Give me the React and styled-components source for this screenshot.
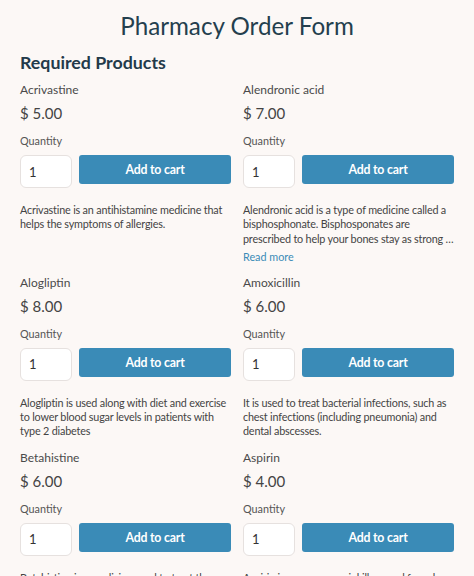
import React from "react";
import styled, { createGlobalStyle } from "styled-components";

const Global = createGlobalStyle`
  html, body { margin: 0; padding: 0; background: #fcf8f6; }
  body { font-family: Lato, "Open Sans", sans-serif; color: #4a4a4a; }
  * { box-sizing: border-box; }
`;

const Page = styled.div`
  padding: 0 20px;
  background: #fcf8f6;
  height: 576px;
  overflow: hidden;
`;

const Title = styled.h1`
  margin: 0;
  padding-top: 10px;
  font-size: 24.2px;
  line-height: 32px;
  font-weight: 400;
  text-align: center;
  color: #243f4e;
`;

const Section = styled.h2`
  margin: 8px 0 0;
  font-size: 17.8px;
  line-height: 24px;
  font-weight: 700;
  color: #233a4a;
`;

const Grid = styled.div`
  margin-top: 7px;
  display: grid;
  grid-template-columns: 211px 211px;
  column-gap: 12px;
  row-gap: 10px;
`;

const Card = styled.div`
  display: flex;
  flex-direction: column;
`;

const Name = styled.div`
  font-size: 12px;
  line-height: 18px;
  color: #4a4a4a;
`;

const Price = styled.div`
  margin-top: 3px;
  font-size: 15px;
  line-height: 22px;
  color: #444;
`;

const Label = styled.div`
  margin-top: 9px;
  font-size: 10.8px;
  line-height: 16px;
  color: #555;
`;

const Row = styled.div`
  margin-top: 6px;
  display: flex;
  align-items: flex-start;
  gap: 7px;
`;

const Qty = styled.input`
  width: 52px;
  height: 33px;
  border: 1px solid #e6e1df;
  border-radius: 6px;
  background: #fff;
  padding: 0 8px;
  font-family: Lato, sans-serif;
  font-size: 13px;
  color: #333;
  outline: none;
`;

const Button = styled.button`
  flex: 1;
  height: 29px;
  border: none;
  border-radius: 3px;
  background: #3a8bb7;
  color: #fff;
  font-family: Lato, sans-serif;
  font-weight: 700;
  font-size: 12.3px;
  letter-spacing: -0.2px;
  cursor: pointer;
`;

const Desc = styled.p`
  margin: 15px 0 0;
  font-size: 10.8px;
  line-height: 14.3px;
  letter-spacing: -0.18px;
  white-space: pre-line;
  color: #444;
`;

const More = styled.a`
  margin-top: 4px;
  font-size: 10.8px;
  line-height: 14px;
  color: #3a8bb7;
  text-decoration: none;
`;

const products = [
  {
    name: "Acrivastine",
    price: "5.00",
    desc: "Acrivastine is an antihistamine medicine that\nhelps the symptoms of allergies.",
  },
  {
    name: "Alendronic acid",
    price: "7.00",
    desc: "Alendronic acid is a type of medicine called a\nbisphosphonate. Bisphosponates are\nprescribed to help your bones stay as strong\u00a0…",
    more: true,
  },
  {
    name: "Alogliptin",
    price: "8.00",
    desc: "Alogliptin is used along with diet and exercise\nto lower blood sugar levels in patients with\ntype 2 diabetes",
  },
  {
    name: "Amoxicillin",
    price: "6.00",
    desc: "It is used to treat bacterial infections, such as\nchest infections (including pneumonia) and\ndental abscesses.",
  },
  {
    name: "Betahistine",
    price: "6.00",
    desc: "Betahistine is a medicine used to treat the\nsymptoms of Ménière's disease.",
  },
  {
    name: "Aspirin",
    price: "4.00",
    desc: "Aspirin is a common painkiller, used for aches\nand pains.",
  },
];

export default function App() {
  return (
    <Page>
      <Global />
      <Title>Pharmacy Order Form</Title>
      <Section>Required Products</Section>
      <Grid>
        {products.map((p) => (
          <Card key={p.name}>
            <Name>{p.name}</Name>
            <Price>$ {p.price}</Price>
            <Label>Quantity</Label>
            <Row>
              <Qty defaultValue="1" />
              <Button>Add to cart</Button>
            </Row>
            <Desc>{p.desc}</Desc>
            {p.more && <More href="#">Read more</More>}
          </Card>
        ))}
      </Grid>
    </Page>
  );
}
